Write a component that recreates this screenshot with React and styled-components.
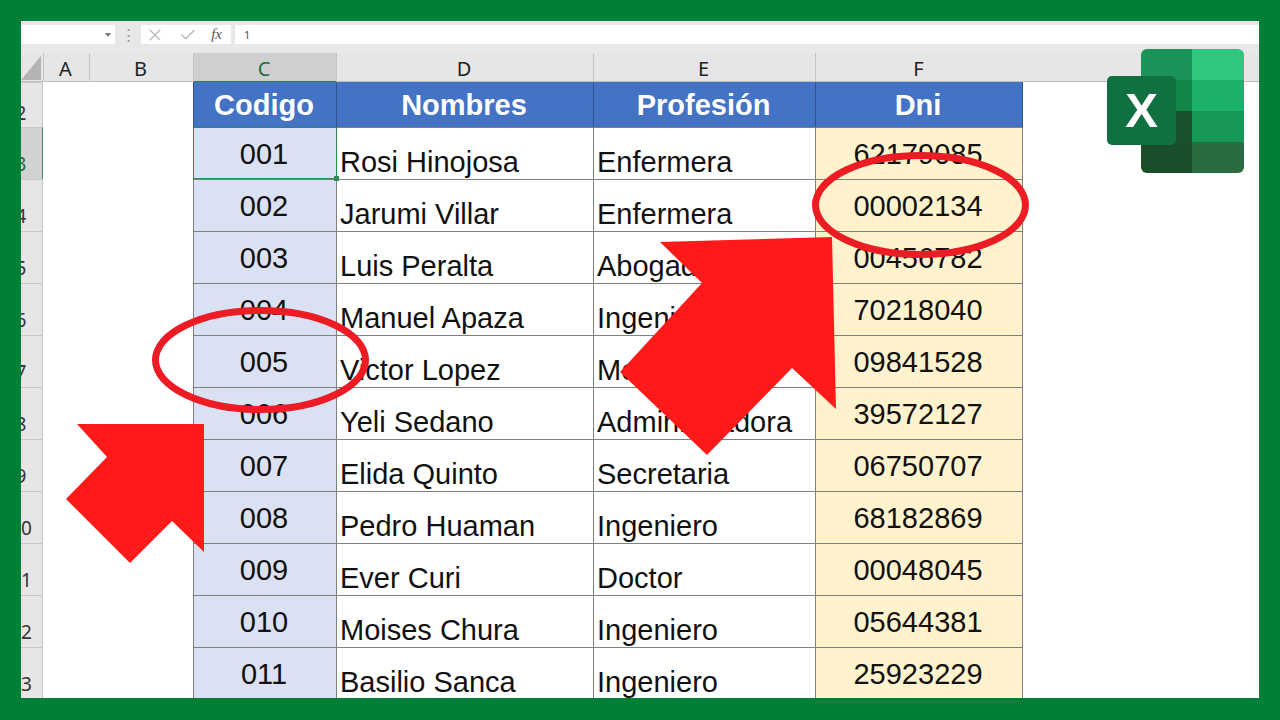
import React from 'react'
import styled, { createGlobalStyle } from 'styled-components'
import { X, Check } from 'lucide-react'

const people = [
  { row: 3, code: '001', name: 'Rosi Hinojosa', job: 'Enfermera', dni: '62179085', active: true },
  { row: 4, code: '002', name: 'Jarumi Villar', job: 'Enfermera', dni: '00002134' },
  { row: 5, code: '003', name: 'Luis Peralta', job: 'Abogado', dni: '00456782' },
  { row: 6, code: '004', name: 'Manuel Apaza', job: 'Ingeniero', dni: '70218040' },
  { row: 7, code: '005', name: 'Victor Lopez', job: 'Medico', dni: '09841528' },
  { row: 8, code: '006', name: 'Yeli Sedano', job: 'Administradora', dni: '39572127' },
  { row: 9, code: '007', name: 'Elida Quinto', job: 'Secretaria', dni: '06750707' },
  { row: 10, code: '008', name: 'Pedro Huaman', job: 'Ingeniero', dni: '68182869' },
  { row: 11, code: '009', name: 'Ever Curi', job: 'Doctor', dni: '00048045' },
  { row: 12, code: '010', name: 'Moises Chura', job: 'Ingeniero', dni: '05644381' },
  { row: 13, code: '011', name: 'Basilio Sanca', job: 'Ingeniero', dni: '25923229' },
]

const columns = ['A', 'B', 'C', 'D', 'E', 'F']
const gridCols = '22px 46px 104px 143px 257px 222px 208px 1fr'

const GlobalStyle = createGlobalStyle`
  html, body {
    margin: 0;
    padding: 0;
    background: #008037;
  }
  * {
    box-sizing: border-box;
  }
`

const Page = styled.div`
  position: relative;
  width: 1280px;
  height: 720px;
  padding: 21px 21px 22px;
  background: #008037;
  overflow: hidden;
`

const Sheet = styled.div`
  width: 1238px;
  height: 677px;
  background: #fff;
  overflow: hidden;
`

const FormulaBar = styled.div`
  display: flex;
  align-items: stretch;
  height: 32px;
  padding: 4px 0 9px;
  background: #e8e8e8;
  font-family: "Noto Sans", sans-serif;
  color: #444;
`

const NameBox = styled.div`
  display: flex;
  align-items: center;
  justify-content: flex-end;
  width: 94px;
  padding-right: 4px;
  background: #fff;
`

const DropArrow = styled.span`
  border-left: 3px solid transparent;
  border-right: 3px solid transparent;
  border-top: 4px solid #777;
`

const Grip = styled.div`
  width: 26px;
  text-align: center;
  font-size: 15px;
  line-height: 19px;
  color: #9a9a9a;
`

const ButtonBox = styled.div`
  display: flex;
  align-items: center;
  justify-content: space-between;
  width: 90px;
  padding: 0 9px 0 4px;
  background: #fff;
`

const Fx = styled.span`
  font-family: "Liberation Serif", serif;
  font-style: italic;
  font-size: 15px;
  color: #555;
`

const FormulaInput = styled.div`
  flex: 1;
  margin-left: 4px;
  padding-left: 9px;
  background: #fff;
  font-size: 11px;
  line-height: 19px;
  color: #555;
`

const HeaderRow = styled.div`
  display: grid;
  grid-template-columns: ${gridCols};
  height: 29px;
  background: #e6e6e6;
  border-bottom: 1px solid #bdbdbd;
`

const Corner = styled.div`
  display: flex;
  align-items: flex-end;
  padding-bottom: 2px;
`

const ColHead = styled.div`
  display: flex;
  align-items: center;
  justify-content: center;
  padding: 2px 2px 0 0;
  font-family: "Noto Sans", sans-serif;
  font-size: 20px;
  border-left: 1px solid #c4c4c4;
  color: ${p => (p.$active ? '#1f6b45' : '#222')};
  background: ${p => (p.$active ? '#cfcfcf' : 'transparent')};
  ${p => p.$active && 'box-shadow: inset 0 -1px 0 #2f7a55;'}
`

const Row = styled.div`
  display: grid;
  grid-template-columns: ${gridCols};
  height: ${p => p.$height}px;
`

const Gutter = styled.div`
  overflow: hidden;
  background: ${p => (p.$active ? '#d2d2d2' : '#e6e6e6')};
  border-right: 1px solid ${p => (p.$active ? '#3f8a62' : '#c8c8c8')};
  border-top: 1px solid #c8c8c8;
`

const GutterLabel = styled.span`
  display: block;
  width: 44px;
  margin-left: -22px;
  padding-top: ${p => p.$top}px;
  text-align: center;
  font-family: "Noto Sans", sans-serif;
  font-size: 19px;
  line-height: 24px;
  color: ${p => (p.$active ? '#1f6b45' : '#333')};
`

const Empty = styled.div`
  background: #fff;
`

const TitleCell = styled.div`
  display: flex;
  align-items: center;
  justify-content: center;
  padding: 2px 2px 0 0;
  background: #4472c4;
  border-left: 1px solid #2f528f;
  ${p => p.$last && 'border-right: 1px solid #2f528f;'}
  color: #fff;
  font-family: "Liberation Sans", sans-serif;
  font-weight: 700;
  font-size: 29px;
`

const Cell = styled.div`
  display: flex;
  font-family: "Liberation Sans", sans-serif;
  font-size: 29px;
  color: #111;
  border-left: 1px solid #7f7f7f;
  border-top: 1px solid #7f7f7f;
  white-space: nowrap;
`

const CodeCell = styled(Cell)`
  position: relative;
  align-items: center;
  justify-content: center;
  padding: 2px 2px 0 0;
  background: #d9e1f2;
  ${p =>
    p.$active &&
    `
    border: 1px solid #2f8a5a;
    margin-right: -1px;
    &::after {
      content: '';
      position: absolute;
      right: -3px;
      bottom: -3px;
      width: 5px;
      height: 5px;
      background: #2f8a5a;
      z-index: 1;
    }
  `}
`

const TextCell = styled(Cell)`
  align-items: flex-end;
  padding-left: 3px;
  line-height: 33px;
  background: #fff;
`

const DniCell = styled(Cell)`
  align-items: center;
  justify-content: center;
  padding: 2px 2px 0 0;
  background: #fff2cc;
  border-right: 1px solid #7f7f7f;
`

const Annotations = styled.svg`
  position: absolute;
  inset: 0;
  width: 1280px;
  height: 720px;
  pointer-events: none;
`

const Logo = styled.svg`
  position: absolute;
  top: 49px;
  left: 1107px;
  width: 137px;
  height: 124px;
`

const ExcelLogo = () => (
  <Logo viewBox="0 0 137 124">
    <defs>
      <clipPath id="sheet">
        <rect x="34" y="0" width="103" height="124" rx="6" />
      </clipPath>
    </defs>
    <g clipPath="url(#sheet)">
      <rect x="34" y="0" width="51" height="31" fill="#1b9359" />
      <rect x="85" y="0" width="52" height="31" fill="#2fc67f" />
      <rect x="34" y="31" width="51" height="31" fill="#118648" />
      <rect x="85" y="31" width="52" height="31" fill="#1cb06b" />
      <rect x="34" y="62" width="51" height="31" fill="#18512c" />
      <rect x="85" y="62" width="52" height="31" fill="#169958" />
      <rect x="34" y="93" width="51" height="31" fill="#184e2a" />
      <rect x="85" y="93" width="52" height="31" fill="#2b6b42" />
    </g>
    <rect x="0" y="27" width="69" height="69" rx="5" fill="#107040" />
    <text
      x="34.5"
      y="78"
      textAnchor="middle"
      fontFamily="Liberation Sans, sans-serif"
      fontWeight="700"
      fontSize="49"
      fill="#fff"
    >
      X
    </text>
  </Logo>
)

export default function App() {
  return (
    <>
      <GlobalStyle />
      <Page>
        <Sheet>
          <FormulaBar>
            <NameBox>
              <DropArrow />
            </NameBox>
            <Grip>⋮</Grip>
            <ButtonBox>
              <X size={20} color="#b5b5b5" strokeWidth={1.3} />
              <Check size={18} color="#b5b5b5" strokeWidth={1.8} />
              <Fx>fx</Fx>
            </ButtonBox>
            <FormulaInput>1</FormulaInput>
          </FormulaBar>

          <HeaderRow>
            <Corner>
              <svg width="20" height="24" viewBox="0 0 20 24">
                <path d="M0 24 L20 0 V24 Z" fill="#b4b4b4" />
              </svg>
            </Corner>
            {columns.map(col => (
              <ColHead key={col} $active={col === 'C'}>
                {col}
              </ColHead>
            ))}
          </HeaderRow>

          <Row $height={45}>
            <Gutter>
              <GutterLabel $top={18}>2</GutterLabel>
            </Gutter>
            <Empty />
            <Empty />
            <TitleCell>Codigo</TitleCell>
            <TitleCell>Nombres</TitleCell>
            <TitleCell>Profesión</TitleCell>
            <TitleCell $last>Dni</TitleCell>
            <Empty />
          </Row>

          {people.map(p => (
            <Row key={p.code} $height={52}>
              <Gutter $active={p.active}>
                <GutterLabel $top={24} $active={p.active}>
                  {p.row}
                </GutterLabel>
              </Gutter>
              <Empty />
              <Empty />
              <CodeCell $active={p.active}>{p.code}</CodeCell>
              <TextCell>{p.name}</TextCell>
              <TextCell>{p.job}</TextCell>
              <DniCell>{p.dni}</DniCell>
              <Empty />
            </Row>
          ))}
        </Sheet>

        <ExcelLogo />

        <Annotations viewBox="0 0 1280 720">
          <polygon
            points="660,242 832,237 836,409 792,368 707,455 620,372 702,283"
            fill="#ff1a1a"
          />
          <polygon
            points="77,424 204,424 204,552 172,521 130,563 66,499 107,457"
            fill="#ff1a1a"
          />
          <ellipse cx="920.5" cy="205" rx="105" ry="49.5" fill="none" stroke="#ec1b24" strokeWidth="7" />
          <ellipse cx="260.5" cy="360" rx="105" ry="49.5" fill="none" stroke="#ec1b24" strokeWidth="7" />
        </Annotations>
      </Page>
    </>
  )
}
